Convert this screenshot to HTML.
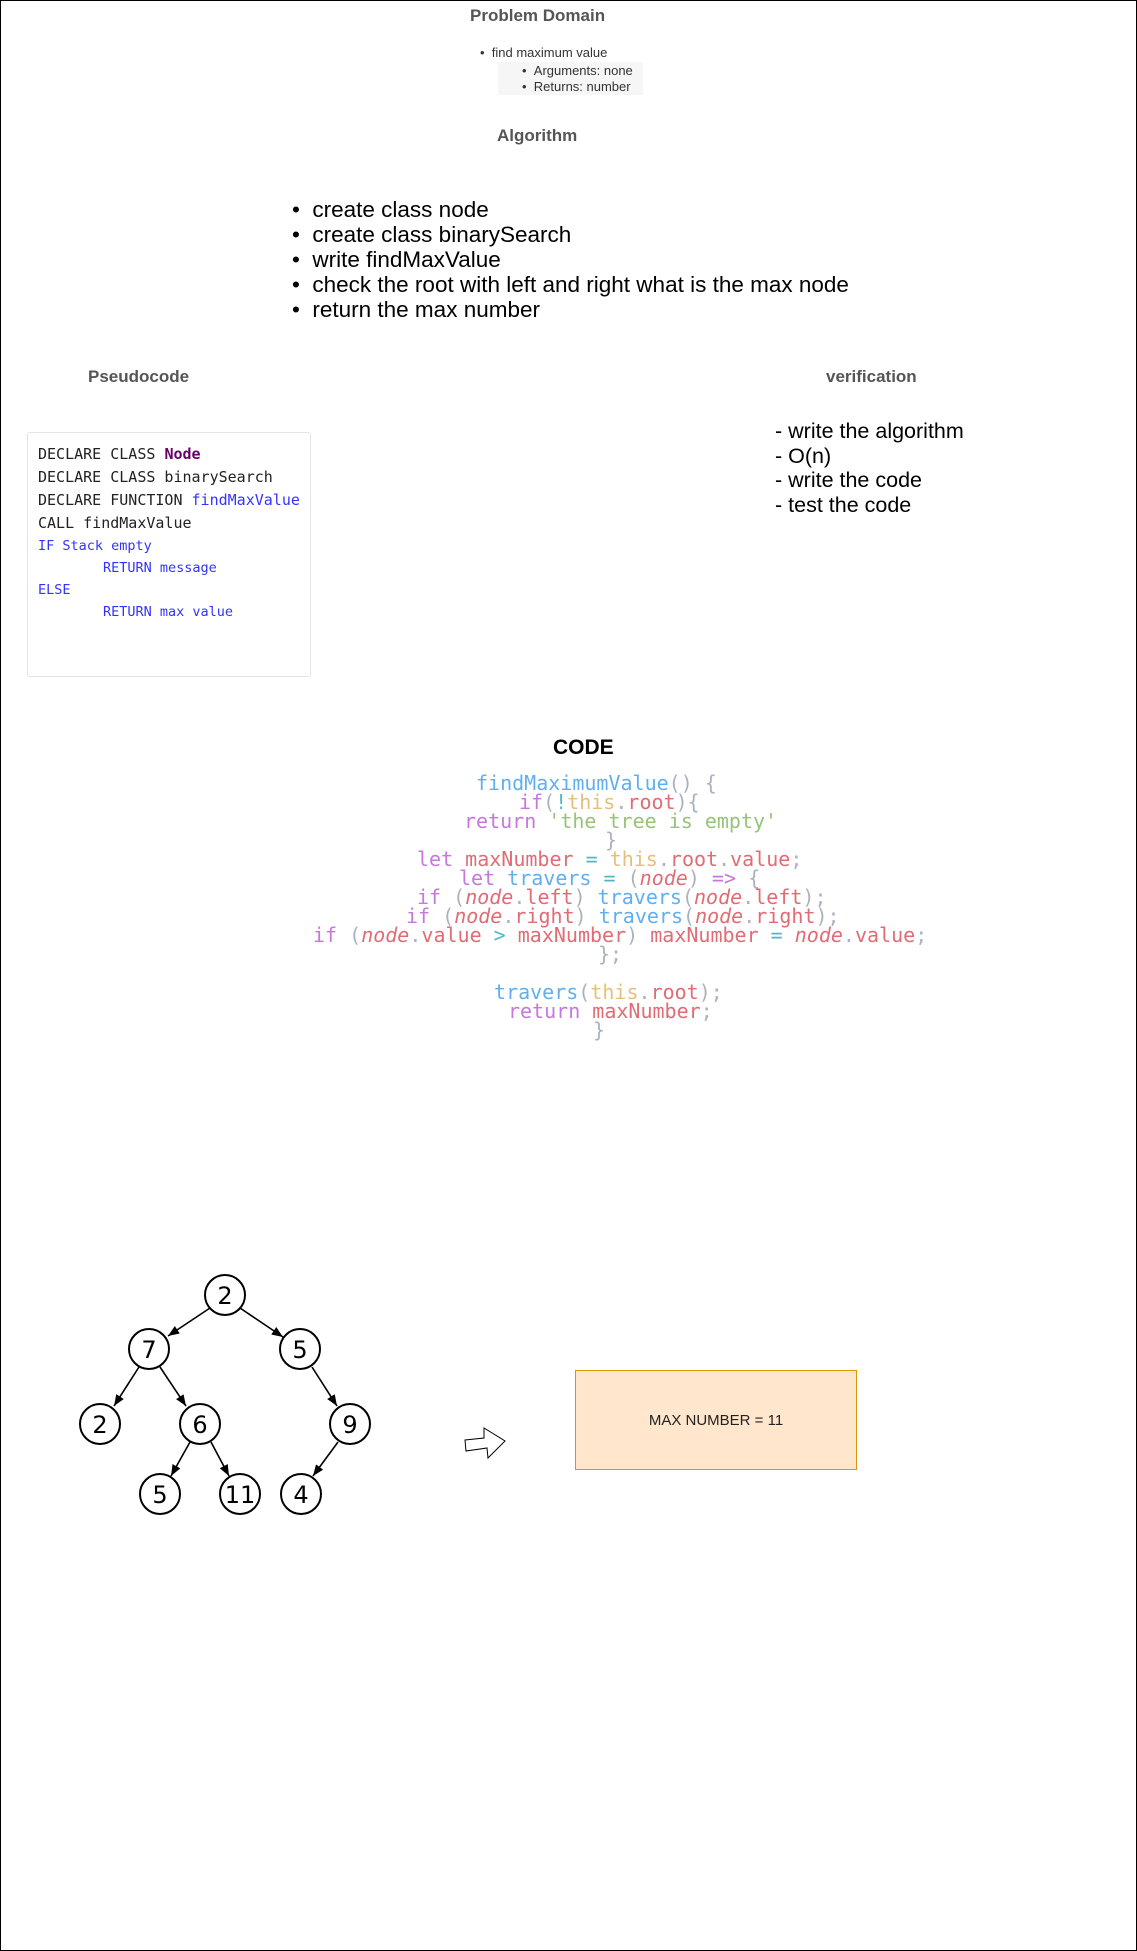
<!DOCTYPE html>
<html><head><meta charset="utf-8"><style>
html,body{margin:0;padding:0;background:#fff}
body{width:1137px;height:1951px;position:relative;overflow:hidden;font-family:"Liberation Sans",sans-serif}
.frame{position:absolute;left:0;top:0;width:1135px;height:1949px;border:1px solid #000}
.a{position:absolute;white-space:pre}
.h{font-weight:bold;color:#555;font-size:17px}
.alg{font-size:22.5px;color:#000}
.mono{font-family:"DejaVu Sans Mono","Liberation Mono",monospace}
.c{font-family:"DejaVu Sans Mono","Liberation Mono",monospace;font-size:20px;line-height:20px}
.b{color:#61afef}.p{color:#c678dd}.r{color:#e06c75}.y{color:#e5c07b}.g{color:#98c379}.cy{color:#56b6c2}.gr{color:#abb2bf}
.i{font-style:italic}
</style></head><body>
<div class="frame"></div>
<div class="a h" style="left:470px;top:6px">Problem Domain</div>
<div class="a" style="left:498px;top:62px;width:145px;height:33px;background:#f6f6f6"></div>
<div class="a" style="left:480px;top:45px;font-size:13px;color:#333">•&nbsp;&nbsp;find maximum value</div>
<div class="a" style="left:522px;top:63px;font-size:13px;color:#333">•&nbsp;&nbsp;Arguments: none</div>
<div class="a" style="left:522px;top:79px;font-size:13px;color:#333">•&nbsp;&nbsp;Returns: number</div>
<div class="a h" style="left:497px;top:126px">Algorithm</div>
<div class="a alg" style="left:292px;top:197px;line-height:25px">•&nbsp;&nbsp;create class node
•&nbsp;&nbsp;create class binarySearch
•&nbsp;&nbsp;write findMaxValue
•&nbsp;&nbsp;check the root with left and right what is the max node
•&nbsp;&nbsp;return the max number</div>
<div class="a h" style="left:88px;top:367px">Pseudocode</div>
<div class="a h" style="left:826px;top:367px">verification</div>
<div class="a" style="left:27px;top:432px;width:282px;height:243px;border:1px solid #e4e4e4;border-radius:3px"></div>
<div class="a mono" style="left:38px;top:443px;font-size:15px;line-height:23px;color:#222">DECLARE CLASS <b style="color:#660066">Node</b>
DECLARE CLASS binarySearch
DECLARE FUNCTION <span style="color:#3333ff">findMaxValue</span>
CALL findMaxValue</div>
<div class="a mono" style="left:38px;top:535px;font-size:13.5px;line-height:22px;color:#3333ff">IF Stack empty
        RETURN message
ELSE
        RETURN max value</div>
<div class="a alg" style="left:775px;top:419px;line-height:24.5px;font-size:21.5px">- write the algorithm
- O(n)
- write the code
- test the code</div>
<div class="a" style="left:553px;top:736px;font-size:21px;font-weight:bold">CODE</div>
<div class="a c" style="left:476px;top:773px"><span class="b">findMaximumValue</span><span class="gr">() {</span></div>
<div class="a c" style="left:519px;top:792px"><span class="p">if</span><span class="gr">(</span><span class="cy">!</span><span class="y">this</span><span class="gr">.</span><span class="r">root</span><span class="gr">){</span></div>
<div class="a c" style="left:464px;top:811px"><span class="p">return</span> <span class="g">'the tree is empty'</span></div>
<div class="a c" style="left:605px;top:830px"><span class="gr">}</span></div>
<div class="a c" style="left:417px;top:849px"><span class="p">let</span> <span class="r">maxNumber</span> <span class="cy">=</span> <span class="y">this</span><span class="gr">.</span><span class="r">root</span><span class="gr">.</span><span class="r">value</span><span class="gr">;</span></div>
<div class="a c" style="left:459px;top:868px"><span class="p">let</span> <span class="b">travers</span> <span class="cy">=</span> <span class="gr">(</span><span class="r i">node</span><span class="gr">)</span> <span class="p">=&gt;</span> <span class="gr">{</span></div>
<div class="a c" style="left:417px;top:887px"><span class="p">if</span> <span class="gr">(</span><span class="r i">node</span><span class="gr">.</span><span class="r">left</span><span class="gr">)</span> <span class="b">travers</span><span class="gr">(</span><span class="r i">node</span><span class="gr">.</span><span class="r">left</span><span class="gr">);</span></div>
<div class="a c" style="left:406px;top:906px"><span class="p">if</span> <span class="gr">(</span><span class="r i">node</span><span class="gr">.</span><span class="r">right</span><span class="gr">)</span> <span class="b">travers</span><span class="gr">(</span><span class="r i">node</span><span class="gr">.</span><span class="r">right</span><span class="gr">);</span></div>
<div class="a c" style="left:313px;top:925px"><span class="p">if</span> <span class="gr">(</span><span class="r i">node</span><span class="gr">.</span><span class="r">value</span> <span class="cy">&gt;</span> <span class="r">maxNumber</span><span class="gr">)</span> <span class="r">maxNumber</span> <span class="cy">=</span> <span class="r i">node</span><span class="gr">.</span><span class="r">value</span><span class="gr">;</span></div>
<div class="a c" style="left:598px;top:944px"><span class="gr">};</span></div>
<div class="a c" style="left:494px;top:982px"><span class="b">travers</span><span class="gr">(</span><span class="y">this</span><span class="gr">.</span><span class="r">root</span><span class="gr">);</span></div>
<div class="a c" style="left:508px;top:1001px"><span class="p">return</span> <span class="r">maxNumber</span><span class="gr">;</span></div>
<div class="a c" style="left:593px;top:1020px"><span class="gr">}</span></div>
<svg class="a" style="left:0;top:0" width="1137" height="1951">
<defs><marker id="m" viewBox="0 0 10 10" refX="10" refY="5" markerWidth="7" markerHeight="7" orient="auto"><path d="M0,1 L10,5 L0,9 z" fill="#000"/></marker></defs>
<g stroke="#000" stroke-width="1.6" marker-end="url(#m)">
<line x1="210" y1="1308" x2="168" y2="1336"/>
<line x1="240" y1="1308" x2="283" y2="1337"/>
<line x1="139" y1="1367" x2="114" y2="1406"/>
<line x1="160" y1="1367" x2="186" y2="1406"/>
<line x1="312" y1="1367" x2="337" y2="1406"/>
<line x1="190" y1="1442" x2="171" y2="1476"/>
<line x1="211" y1="1442" x2="229" y2="1476"/>
<line x1="338" y1="1442" x2="313" y2="1476"/>
</g>
<g fill="#fff" stroke="#000" stroke-width="2">
<circle cx="225" cy="1295" r="20"/><circle cx="149" cy="1349" r="20"/><circle cx="300" cy="1349" r="20"/>
<circle cx="100" cy="1424" r="20"/><circle cx="200" cy="1424" r="20"/><circle cx="350" cy="1424" r="20"/>
<circle cx="160" cy="1494" r="20"/><circle cx="240" cy="1494" r="20"/><circle cx="301" cy="1494" r="20"/>
</g>
<g font-family="DejaVu Sans,sans-serif" font-size="24" text-anchor="middle">
<text x="225" y="1304">2</text><text x="149" y="1358">7</text><text x="300" y="1358">5</text>
<text x="100" y="1433">2</text><text x="200" y="1433">6</text><text x="350" y="1433">9</text>
<text x="160" y="1503">5</text><text x="240" y="1503">11</text><text x="301" y="1503">4</text>
</g>
<path d="M465,1440 L484,1438 L484,1428 L505,1441 L488,1458 L487,1448 L466,1451 Z" fill="#fff" stroke="#000" stroke-width="1"/>
<rect x="575.5" y="1370.5" width="281" height="99" fill="#ffe6cc" stroke="#d79b00"/>
<text x="716" y="1425" font-family="Liberation Sans,sans-serif" font-size="15" text-anchor="middle" fill="#222">MAX NUMBER = 11</text>
</svg>
</body></html>
